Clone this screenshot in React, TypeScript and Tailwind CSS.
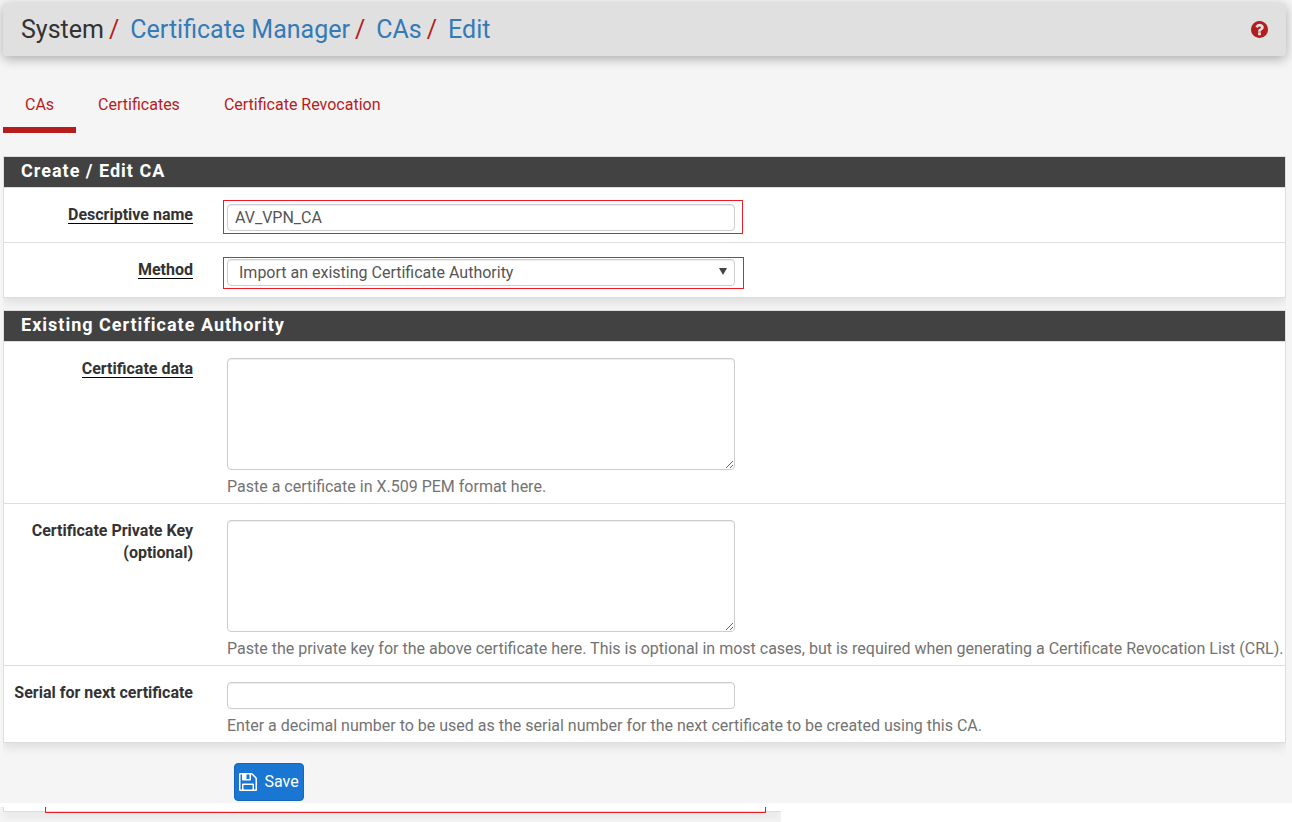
import type { ReactNode } from 'react';

function QuestionCircleIcon({ className }: { className?: string }) {
  return (
    <svg viewBox="128 128 1536 1536" fill="currentColor" className={className} aria-hidden="true">
      <path d="M1024 1376v-192q0-14-9-23t-23-9h-192q-14 0-23 9t-9 23v192q0 14 9 23t23 9h192q14 0 23-9t9-23zm256-672q0-88-55.5-163t-138.5-116-170-41q-243 0-371 213-15 24 8 42l132 100q7 6 19 6 16 0 25-12 53-68 86-92 34-24 86-24 48 0 85.500 26t37.500 59q0 38-20 61t-68 45q-63 28-115.500 86.500t-52.500 125.500v36q0 14 9 23t23 9h192q14 0 23-9t9-23q0-19 21.500-49.500t54.500-49.500q32-18 49-28.500t46-35 44.500-48 28-60.500 12.500-81zm384 192q0 209-103 385.500t-279.500 279.500-385.500 103-385.500-103-279.500-279.500-103-385.500 103-385.500 279.500-279.500 385.500-103 385.500 103 279.500 279.500 103 385.500z" />
    </svg>
  );
}

function FloppyIcon({ className }: { className?: string }) {
  return (
    <svg viewBox="128 128 1536 1536" fill="currentColor" className={className} aria-hidden="true">
      <path d="M512 1536h768v-384h-768v384zm896 0h128v-896q0-14-10-38.500t-20-34.500l-281-281q-10-10-34-20t-39-10v416q0 40-28 68t-68 28h-576q-40 0-68-28t-28-68v-416h-128v1280h128v-416q0-40 28-68t68-28h832q40 0 68 28t28 68v416zm-384-928v-320q0-13-9.500-22.500t-22.500-9.500h-192q-13 0-22.500 9.500t-9.500 22.500v320q0 13 9.500 22.500t22.500 9.500h192q13 0 22.500-9.500t9.500-22.500zm640 32v928q0 40-28 68t-68 28h-1344q-40 0-68-28t-28-68v-1344q0-40 28-68t68-28h928q40 0 88 20t76 48l280 280q28 28 48 76t20 88z" />
    </svg>
  );
}

const controlClass =
  'block w-full rounded border border-[#ccc] bg-white text-base text-[#555] shadow-[inset_0_1px_1px_rgba(0,0,0,0.075)] outline-none';

function Panel({ title, children }: { title: string; children: ReactNode }) {
  return (
    <div className="overflow-hidden pb-3">
      <section className="border border-[#ddd] bg-white shadow-[0_4px_10px_rgba(0,0,0,0.1)]">
        <h2 className="h-[30px] bg-[#424242] px-[17px] text-lg leading-7 font-bold tracking-[1px] text-white">
          {title}
        </h2>
        {children}
      </section>
    </div>
  );
}

type FieldProps = {
  id: string;
  label: ReactNode;
  required?: boolean;
  highlight?: string;
  help?: string;
  children: ReactNode;
};

function Field({ id, label, required, highlight, help, children }: FieldProps) {
  return (
    <div className="flex border-t border-[#ddd] pt-4">
      <div className="w-[189px] shrink-0 text-right leading-[22px] font-bold text-[#333]">
        <label htmlFor={id} className={required ? 'inline-block border-b border-black leading-4' : ''}>
          {label}
        </label>
      </div>
      <div className="min-w-0 grow pl-[34px]">
        <div className="relative w-[48%] min-w-60">
          {children}
          {highlight && <span className={`pointer-events-none absolute border border-[#ed1c24] ${highlight}`} />}
        </div>
        {help ? <p className="pt-1.5 pb-[5px] leading-[22px] text-[#737373]">{help}</p> : <div className="h-[11px]" />}
      </div>
    </div>
  );
}

export default function App() {
  return (
    <div className="bg-white font-[Roboto,sans-serif] text-base">
      <div className="overflow-hidden bg-[#f5f5f5] pt-[3px] pb-0.5">
        <header className="mr-1.5 ml-[3px] flex h-[53px] items-center justify-between rounded bg-[#e0e0e0] pr-[18px] pl-[18px] shadow-[0_3px_12px_rgba(0,0,0,0.3)]">
          <nav className="flex text-[25px] leading-[30px] text-[#337ab7]" aria-label="Breadcrumb">
            <span className="text-[#333]">System</span>
            <span className="pr-[11px] pl-[5px] text-[#b71c1c]">/</span>
            <a href="#manager">Certificate Manager</a>
            <span className="pr-[11px] pl-[5px] text-[#b71c1c]">/</span>
            <a href="#cas">CAs</a>
            <span className="pr-[11px] pl-[5px] text-[#b71c1c]">/</span>
            <a href="#edit">Edit</a>
          </nav>
          <a href="#help" aria-label="Help" className="text-[#b71c1c]">
            <QuestionCircleIcon className="size-[17px]" />
          </a>
        </header>

        <main className="mr-1.5 ml-[3px]">
          <nav className="flex pt-[27px] pb-[23px] text-[#b71c1c]" aria-label="Sections">
            <a href="#cas" className="h-[50px] border-b-[6px] border-[#b71c1c] px-[22px] leading-[44px]">
              CAs
            </a>
            <a href="#certificates" className="px-[22px] leading-[44px]">
              Certificates
            </a>
            <a href="#revocation" className="px-[22px] leading-[44px]">
              Certificate Revocation
            </a>
          </nav>

          <form>
            <Panel title="Create / Edit CA">
              <Field id="descr" label="Descriptive name" required highlight="-top-1 -right-2 -bottom-[3px] -left-1">
                <input id="descr" type="text" defaultValue="AV_VPN_CA" className={`${controlClass} h-[27px] px-[7px]`} />
              </Field>
              <Field id="method" label="Method" required highlight="-top-0.5 -right-[9px] -bottom-[3px] -left-1">
                <select id="method" className={`${controlClass} h-[27px] appearance-none px-[11px]`}>
                  <option>Import an existing Certificate Authority</option>
                </select>
                <svg
                  viewBox="0 0 8 7"
                  className="pointer-events-none absolute top-[9px] right-2 h-[7px] w-2"
                  aria-hidden="true"
                >
                  <path d="M0 0h8L4 7z" fill="#444" />
                </svg>
              </Field>
            </Panel>

            <Panel title="Existing Certificate Authority">
              <Field id="cert" label="Certificate data" required help="Paste a certificate in X.509 PEM format here.">
                <textarea id="cert" className={`${controlClass} h-28 resize px-[7px]`} />
              </Field>
              <Field
                id="key"
                label={
                  <>
                    Certificate Private Key
                    <br />
                    (optional)
                  </>
                }
                help="Paste the private key for the above certificate here. This is optional in most cases, but is required when generating a Certificate Revocation List (CRL)."
              >
                <textarea id="key" className={`${controlClass} h-28 resize px-[7px]`} />
              </Field>
              <Field
                id="serial"
                label="Serial for next certificate"
                help="Enter a decimal number to be used as the serial number for the next certificate to be created using this CA."
              >
                <input id="serial" type="text" className={`${controlClass} h-[27px] px-[7px]`} />
              </Field>
            </Panel>

            <button
              type="button"
              className="mt-2 ml-[231px] flex h-[38px] w-[70px] items-center justify-center gap-[7px] rounded border border-[#1565c0] bg-[#1976d2] text-white"
            >
              <FloppyIcon className="size-[18px]" />
              Save
            </button>
          </form>
        </main>
      </div>

      <div className="mt-1 h-[15px] w-[781px] max-w-full overflow-hidden bg-[#f5f5f5] pl-[3px]">
        <div className="h-[5px] border-b border-l border-[#ddd] bg-white pl-[41px] shadow-[0_4px_10px_rgba(0,0,0,0.1)]">
          <div className="relative h-1.5 w-[721px] border-x border-b border-[#ed1c24]" />
        </div>
      </div>
    </div>
  );
}
